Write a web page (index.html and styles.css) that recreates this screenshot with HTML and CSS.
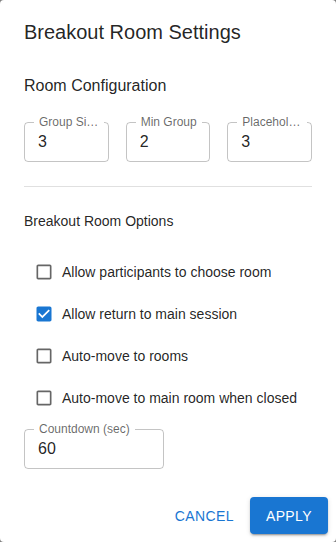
FILE: index.html
```html
<!DOCTYPE html>
<html lang="en">
<head>
    <meta charset="UTF-8">
    <meta name="viewport" content="width=device-width, initial-scale=1.0">
    <title>Breakout Room Settings</title>
    <link rel="stylesheet" href="styles.css">
</head>
<body>
    <div class="dialog">
        <h2 class="dialog-title">Breakout Room Settings</h2>

        <div class="dialog-content">
            <h3 class="section-title">Room Configuration</h3>

            <div class="field-row">
                <div class="field">
                    <span class="field-label">Group Size</span>
                    <input type="text" value="3">
                </div>
                <div class="field">
                    <span class="field-label">Min Group</span>
                    <input type="text" value="2">
                </div>
                <div class="field">
                    <span class="field-label">Placeholder</span>
                    <input type="text" value="3">
                </div>
            </div>

            <hr class="divider">

            <h4 class="options-title">Breakout Room Options</h4>

            <div class="options">
                <label class="option">
                    <svg class="box" viewBox="0 0 24 24"><path d="M19 5v14H5V5h14m0-2H5c-1.11 0-2 .9-2 2v14c0 1.1.89 2 2 2h14c1.11 0 2-.9 2-2V5c0-1.1-.89-2-2-2z"/></svg>
                    Allow participants to choose room
                </label>
                <label class="option">
                    <svg class="box checked" viewBox="0 0 24 24"><path d="M19 3H5c-1.11 0-2 .9-2 2v14c0 1.1.89 2 2 2h14c1.11 0 2-.9 2-2V5c0-1.1-.89-2-2-2zm-9 14l-5-5 1.41-1.41L10 14.17l7.59-7.59L19 8l-9 9z"/></svg>
                    Allow return to main session
                </label>
                <label class="option">
                    <svg class="box" viewBox="0 0 24 24"><path d="M19 5v14H5V5h14m0-2H5c-1.11 0-2 .9-2 2v14c0 1.1.89 2 2 2h14c1.11 0 2-.9 2-2V5c0-1.1-.89-2-2-2z"/></svg>
                    Auto-move to rooms
                </label>
                <label class="option">
                    <svg class="box" viewBox="0 0 24 24"><path d="M19 5v14H5V5h14m0-2H5c-1.11 0-2 .9-2 2v14c0 1.1.89 2 2 2h14c1.11 0 2-.9 2-2V5c0-1.1-.89-2-2-2z"/></svg>
                    Auto-move to main room when closed
                </label>
            </div>

            <div class="field countdown">
                <span class="field-label">Countdown (sec)</span>
                <input type="text" value="60">
            </div>
        </div>

        <div class="dialog-actions">
            <button class="btn-text">Cancel</button>
            <button class="btn-contained">Apply</button>
        </div>
    </div>
</body>
</html>
```

FILE: styles.css
```css
body {
    margin: 0;
    background-color: #7f7f7f;
    font-family: "Liberation Sans", Arial, sans-serif;
    color: rgba(0, 0, 0, 0.87);
}

.dialog {
    height: 542px;
    background-color: #fff;
    border-radius: 4px;
    display: flex;
    flex-direction: column;
    box-sizing: border-box;
}

.dialog-title {
    margin: 0;
    padding: 16px 24px;
    font-size: 20px;
    font-weight: 400;
    line-height: 32px;
}

.dialog-content {
    padding: 0 24px;
    flex: 1;
}

.section-title {
    margin: 10px 0 24px;
    font-size: 16px;
    font-weight: 400;
    line-height: 24px;
}

.field-row {
    display: flex;
    gap: 17px;
}

.field {
    position: relative;
    flex: 1;
    height: 40px;
    border: 1px solid rgba(0, 0, 0, 0.23);
    border-radius: 4px;
    box-sizing: border-box;
}

.field-label {
    position: absolute;
    left: 9px;
    top: -7px;
    max-width: 59.6px;
    padding: 0 5px;
    background-color: #fff;
    font-size: 12px;
    line-height: 13px;
    color: rgba(0, 0, 0, 0.6);
    white-space: nowrap;
    overflow: hidden;
    text-overflow: ellipsis;
}

.field input {
    width: 100%;
    height: 100%;
    box-sizing: border-box;
    border: none;
    outline: none;
    background: transparent;
    padding: 0 13px;
    font-family: inherit;
    font-size: 16px;
    color: rgba(0, 0, 0, 0.87);
}

.divider {
    margin: 24px 0 0;
    border: none;
    border-top: 1px solid #e0e0e0;
}

.options-title {
    margin: 24px 0 20px;
    font-size: 14px;
    font-weight: 400;
    line-height: 20px;
}

.option {
    display: flex;
    align-items: center;
    gap: 8px;
    height: 42px;
    padding-left: 10px;
    font-size: 14px;
}

.box {
    width: 20px;
    height: 20px;
    fill: rgba(0, 0, 0, 0.6);
}

.box.checked {
    fill: #1976d2;
}

.countdown {
    width: 140px;
    flex: none;
    margin-top: 10px;
}

.countdown .field-label {
    max-width: none;
}

.dialog-actions {
    display: flex;
    justify-content: flex-end;
    gap: 8px;
    padding: 8px;
}

button {
    font-family: inherit;
    font-size: 14px;
    font-weight: 500;
    letter-spacing: 0.4px;
    text-transform: uppercase;
    border: none;
    border-radius: 4px;
    height: 37px;
    cursor: pointer;
}

.btn-text {
    background: none;
    color: #1976d2;
    padding: 0 8px;
}

.btn-contained {
    background-color: #1976d2;
    color: #fff;
    padding: 0 16px;
    box-shadow: 0 3px 1px -2px rgba(0,0,0,0.2), 0 2px 2px 0 rgba(0,0,0,0.14), 0 1px 5px 0 rgba(0,0,0,0.12);
}
```
